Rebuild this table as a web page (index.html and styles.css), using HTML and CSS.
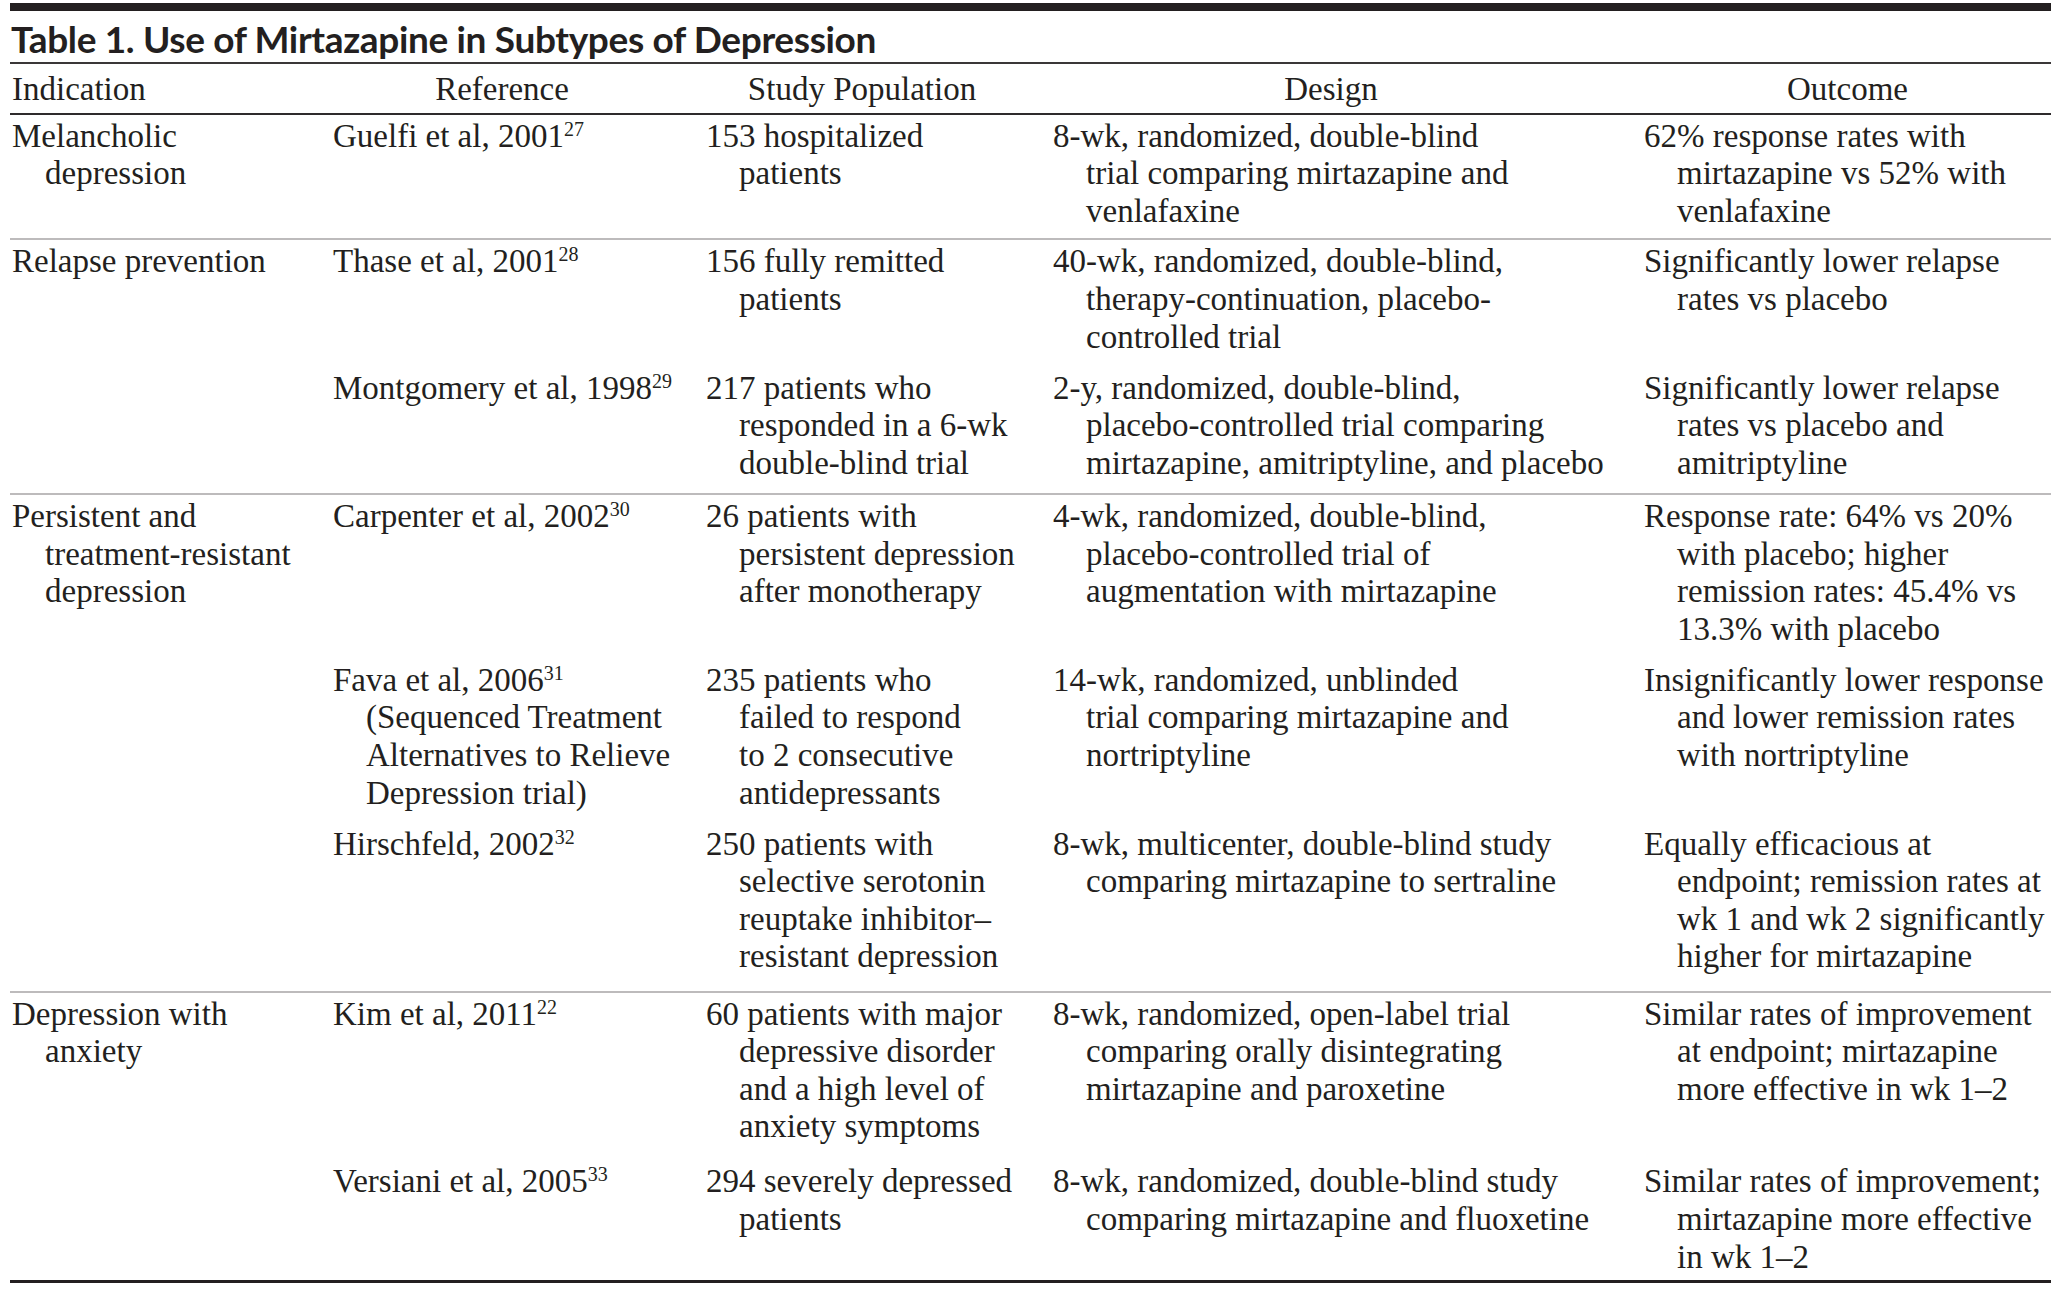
FILE: index.html
```html
<!DOCTYPE html>
<html lang="en">
<head>
<meta charset="utf-8">
<title>Table 1. Use of Mirtazapine in Subtypes of Depression</title>
<link rel="stylesheet" href="styles.css">
</head>
<body>
<div class="page">
  <div class="topbar"></div>
  <h1 class="title">Table 1. Use of Mirtazapine in Subtypes of Depression</h1>
  <table class="tbl">
    <colgroup>
      <col class="c1"><col class="c2"><col class="c3"><col class="c4"><col class="c5">
    </colgroup>
    <thead>
      <tr>
        <th class="left">Indication</th>
        <th>Reference</th>
        <th>Study Population</th>
        <th>Design</th>
        <th class="last">Outcome</th>
      </tr>
    </thead>
    <tbody>
      <tr class="tight">
        <td>Melancholic<br>depression</td>
        <td>Guelfi et al, 2001<sup class="sup">27</sup></td>
        <td>153 hospitalized<br>patients</td>
        <td>8-wk, randomized, double-blind<br>trial comparing mirtazapine and<br>venlafaxine</td>
        <td class="last">62% response rates with<br>mirtazapine vs 52% with<br>venlafaxine</td>
      </tr>
      <tr class="group">
        <td>Relapse prevention</td>
        <td>Thase et al, 2001<sup class="sup">28</sup></td>
        <td>156 fully remitted<br>patients</td>
        <td>40-wk, randomized, double-blind,<br>therapy-continuation, placebo-<br>controlled trial</td>
        <td class="last">Significantly lower relapse<br>rates vs placebo</td>
      </tr>
      <tr>
        <td></td>
        <td>Montgomery et al, 1998<sup class="sup">29</sup></td>
        <td>217 patients who<br>responded in a 6-wk<br>double-blind trial</td>
        <td>2-y, randomized, double-blind,<br>placebo-controlled trial comparing<br>mirtazapine, amitriptyline, and placebo</td>
        <td class="last">Significantly lower relapse<br>rates vs placebo and<br>amitriptyline</td>
      </tr>
      <tr class="group">
        <td>Persistent and<br>treatment-resistant<br>depression</td>
        <td>Carpenter et al, 2002<sup class="sup">30</sup></td>
        <td>26 patients with<br>persistent depression<br>after monotherapy</td>
        <td>4-wk, randomized, double-blind,<br>placebo-controlled trial of<br>augmentation with mirtazapine</td>
        <td class="last">Response rate: 64% vs 20%<br>with placebo; higher<br>remission rates: 45.4% vs<br>13.3% with placebo</td>
      </tr>
      <tr>
        <td></td>
        <td>Fava et al, 2006<sup class="sup">31</sup><br>(Sequenced Treatment<br>Alternatives to Relieve<br>Depression trial)</td>
        <td>235 patients who<br>failed to respond<br>to 2 consecutive<br>antidepressants</td>
        <td>14-wk, randomized, unblinded<br>trial comparing mirtazapine and<br>nortriptyline</td>
        <td class="last">Insignificantly lower response<br>and lower remission rates<br>with nortriptyline</td>
      </tr>
      <tr class="roomy">
        <td></td>
        <td>Hirschfeld, 2002<sup class="sup">32</sup></td>
        <td>250 patients with<br>selective serotonin<br>reuptake inhibitor–<br>resistant depression</td>
        <td>8-wk, multicenter, double-blind study<br>comparing mirtazapine to sertraline</td>
        <td class="last">Equally efficacious at<br>endpoint; remission rates at<br>wk 1 and wk 2 significantly<br>higher for mirtazapine</td>
      </tr>
      <tr class="group roomy">
        <td>Depression with<br>anxiety</td>
        <td>Kim et al, 2011<sup class="sup">22</sup></td>
        <td>60 patients with major<br>depressive disorder<br>and a high level of<br>anxiety symptoms</td>
        <td>8-wk, randomized, open-label trial<br>comparing orally disintegrating<br>mirtazapine and paroxetine</td>
        <td class="last">Similar rates of improvement<br>at endpoint; mirtazapine<br>more effective in wk 1–2</td>
      </tr>
      <tr class="final">
        <td></td>
        <td>Versiani et al, 2005<sup class="sup">33</sup></td>
        <td>294 severely depressed<br>patients</td>
        <td>8-wk, randomized, double-blind study<br>comparing mirtazapine and fluoxetine</td>
        <td class="last">Similar rates of improvement;<br>mirtazapine more effective<br>in wk 1–2</td>
      </tr>
    </tbody>
  </table>
</div>
</body>
</html>
```

FILE: styles.css
```css
html, body {
  margin: 0;
  background: #ffffff;
}

body {
  padding: 3px 9px 0 10px;
  color: #231f20;
}

.page {
  width: 2041px;
}

.topbar {
  height: 8px;
  background: #231f20;
}

.title {
  margin: 0;
  padding: 6px 0 1px 1px;
  font-family: Lato, "Open Sans", sans-serif;
  font-weight: 700;
  font-size: 37px;
  line-height: 44px;
  letter-spacing: -0.35px;
  color: #231f20;
  border-bottom: 2px solid #3a3738;
}

.tbl {
  width: 2041px;
  table-layout: fixed;
  border-collapse: separate;
  border-spacing: 0;
  font-family: "Liberation Serif", "Times New Roman", serif;
  font-size: 33px;
  line-height: 37.6px;
  color: #231f20;
}

.c1 { width: 321px; }
.c2 { width: 373px; }
.c3 { width: 347px; }
.c4 { width: 591px; }
.c5 { width: 409px; }

.tbl th {
  font-weight: normal;
  text-align: center;
  padding: 7px 33px 4px 2px;
  border-bottom: 2px solid #2e2b2c;
  white-space: nowrap;
}

.tbl th.left {
  text-align: left;
}

.tbl th.last {
  padding-right: 0;
}

.tbl td {
  vertical-align: top;
  text-align: left;
  white-space: nowrap;
  padding: 3px 33px 10.5px 35px;
  text-indent: -33px;
}

.tbl td.last {
  padding-right: 0;
}

.tbl tr.tight td {
  padding-bottom: 8px;
}

.tbl tr.roomy td {
  padding-bottom: 14.5px;
}

.tbl tr.group td {
  border-top: 2px solid #bdbbbc;
}

.tbl tr.final td {
  padding-bottom: 4px;
  border-bottom: 3px solid #231f20;
}

.sup {
  font-size: 20px;
  line-height: 0;
  vertical-align: 11px;
  text-indent: 0;
}
```
